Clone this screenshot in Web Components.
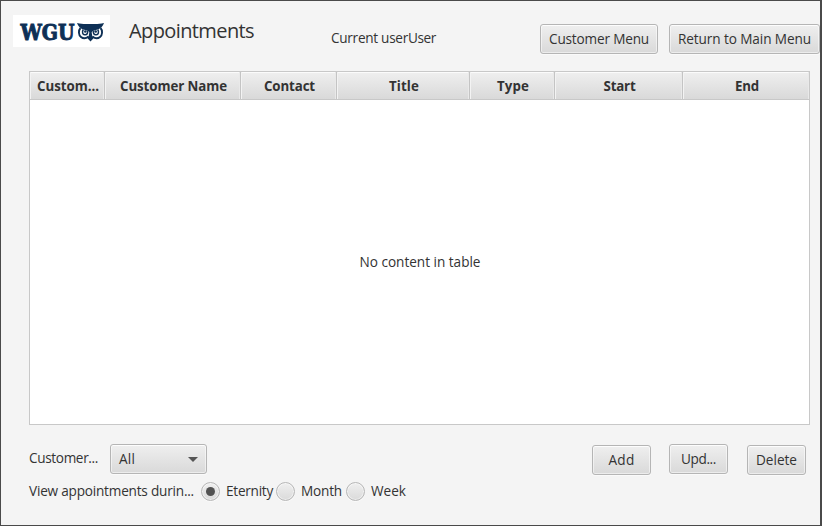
<!DOCTYPE html>
<html lang="en">
<head>
<meta charset="utf-8">
<title>Appointments</title>
<style>
  html, body { margin: 0; height: 100%; overflow: hidden; }
  body { font: 13.6px/18px "Open Sans", "Noto Sans", sans-serif; color: #333; }
</style>
</head>
<body>
<appointments-window></appointments-window>
<script>
// A one-line label whose letter spacing is tuned to reach the width in its "w" attribute.
class FxText extends HTMLElement {
  connectedCallback() {
    const root = this.attachShadow({ mode: 'open' });
    root.innerHTML = `<style>:host{display:inline-block;white-space:nowrap;flex:none}span{display:inline-block}</style><span><slot></slot></span>`;
    const w = parseFloat(this.getAttribute('w'));
    if (!w) return;
    this.style.width = w + 'px';
    const span = root.querySelector('span');
    const natural = span.getBoundingClientRect().width;
    span.style.letterSpacing = ((w - natural) / this.textContent.length) + 'px';
  }
}

class FxButton extends HTMLElement {
  connectedCallback() {
    this.attachShadow({ mode: 'open' }).innerHTML = `<style>
      :host{display:flex;flex:none;box-sizing:border-box;height:30px;align-items:center;justify-content:center;
        border:1px solid #b5b5b5;border-radius:3px;background:linear-gradient(#efefef,#d9d9d9);
        box-shadow:inset 0 0 0 1px #ffffff80,inset 0 1px 0 #fbfbfb,0 1px 0 #fafafa;padding-bottom:1px}
    </style><slot></slot>`;
  }
}

class FxCombo extends HTMLElement {
  connectedCallback() {
    this.attachShadow({ mode: 'open' }).innerHTML = `<style>
      :host{display:flex;flex:none;box-sizing:border-box;width:97px;height:30px;align-items:center;justify-content:space-between;
        border:1px solid #b5b5b5;border-radius:3px;background:linear-gradient(#efefef,#d9d9d9);
        box-shadow:inset 0 0 0 1px #ffffff80,inset 0 1px 0 #fbfbfb,0 1px 0 #fafafa;padding:0 8px 1px 8px}
      svg{display:block;margin-top:2px}
    </style><slot></slot><svg width="10" height="5" viewBox="0 0 10 5"><path d="M0 0H10L5 5Z" fill="#555"/></svg>`;
  }
}

class FxRadio extends HTMLElement {
  connectedCallback() {
    const dot = this.hasAttribute('checked') ? '<i></i>' : '';
    this.attachShadow({ mode: 'open' }).innerHTML = `<style>
      :host{display:flex;flex:none;align-items:center;gap:6px}
      b{display:grid;place-items:center;box-sizing:border-box;width:19px;height:19px;border-radius:50%;border:1px solid #b7b7b7;
        background:linear-gradient(#efefef,#dadada);box-shadow:inset 0 0 0 1px #ffffff80,0 1px 0 #fafafa}
      i{width:9px;height:9px;border-radius:50%;background:#525252}
      ::slotted(*){margin-bottom:1px}
    </style><b>${dot}</b><slot></slot>`;
  }
}

class FxTable extends HTMLElement {
  connectedCallback() {
    const cols = [['Custom...', 75, 62], ['Customer Name', 136, 107], ['Contact', 96, 51], ['Title', 133, 30],
                  ['Type', 85, 32], ['Start', 128, 32], ['End', 126, 24]];
    this.attachShadow({ mode: 'open' }).innerHTML = `<style>
      :host{display:flex;flex-direction:column;box-sizing:border-box;width:781px;height:354px;border:1px solid #c8c8c8;background:#fff}
      header{display:flex;height:27px;border-bottom:1px solid #c8c8c8;font-size:13.3px;font-weight:700;
        background:linear-gradient(#efefef,#d9d9d9);box-shadow:inset 0 1px 0 #fbfbfb}
      header>div{display:flex;box-sizing:border-box;align-items:center;justify-content:center;padding:0 0 0 2px;
        border-right:1px solid #c4c4c4;box-shadow:inset 1px 0 0 #f3f3f3,inset -1px 0 0 #e9e9e9}
      header>div:last-child{flex:1;border:0}
      main{flex:1;display:grid;place-items:center;padding-left:1px}
    </style>
    <header>${cols.map(c => `<div style="width:${c[1]}px"><fx-text w="${c[2]}">${c[0]}</fx-text></div>`).join('')}</header>
    <main><fx-text w="121">No content in table</fx-text></main>`;
  }
}

class WguLogo extends HTMLElement {
  connectedCallback() {
    this.attachShadow({ mode: 'open' }).innerHTML = `<style>:host{display:block;flex:none;width:97px;height:32px;background:#fff}svg{display:block}</style>
    <svg width="97" height="32" viewBox="0 0 97 32">
      <text x="7.500" y="24.500" textLength="54" lengthAdjust="spacingAndGlyphs" font-family="DejaVu Serif, serif" font-weight="700" font-size="22" fill="#0e3056" stroke="#0e3056" stroke-width="1">WGU</text>
      <path fill="#0e3056" d="M64 8C69 9.400 73 9 77.500 9S86 9.400 91 8C90 11 88 13 86 14L80 16L77.500 18L75 16L69 14C67 13 65 11 64 8Z"/>
      <g fill="none" stroke="#0e3056">
        <path d="M67.500 13C65.200 15.500 65.500 20 68 22S73.500 23.200 75.500 21.500" stroke-width="1.900"/>
        <path d="M87.500 13C89.800 15.500 89.500 20 87 22S81.500 23.200 79.500 21.500" stroke-width="1.900"/>
        <path d="M70.300 14.500C68.800 17 69.500 19.500 71.800 19.800S75 18 74.500 16" stroke-width="1.500"/>
        <path d="M84.700 14.500C86.200 17 85.500 19.500 83.200 19.800S80 18 80.500 16" stroke-width="1.500"/>
      </g>
      <circle cx="72.300" cy="16.500" r="1.300" fill="#0e3056"/><circle cx="82.700" cy="16.500" r="1.300" fill="#0e3056"/>
      <path d="M76.600 16H78.400L79.300 21L80.800 23L77.500 26.500L74.200 23L75.700 21Z" fill="#0e3056"/>
    </svg>`;
  }
}

class AppointmentsWindow extends HTMLElement {
  connectedCallback() {
    this.attachShadow({ mode: 'open' }).innerHTML = `<style>
      :host{display:block;box-sizing:border-box;width:822px;height:526px;background:#f4f4f4;
        border:1px solid #4a4a4a;border-right-width:2px;overflow:hidden}
      .top{display:flex;align-items:flex-start;height:70px;padding-left:12px}
      wgu-logo{margin-top:14px}
      .title{font-size:20px;line-height:28px;margin:16px 0 0 19px}
      .user{margin:28px 0 0 77px}
      .user2{margin:28px 0 0 0}
      .cm{width:118px;margin:23px 0 0 104px}
      .rm{width:151px;margin:23px 0 0 11px}
      fx-table{margin-left:28px}
      .filters{display:flex;align-items:flex-start;padding:19px 0 0 28px;height:32px}
      .lbl{margin-top:5px}
      fx-combo{margin-left:12px}
      .act{width:59px}
      .add{margin:1px 0 0 385px}
      .upd{margin-left:18px}
      .del{margin:1px 0 0 19px}
      .range{display:flex;align-items:center;padding:6px 0 0 28px;height:19px}
      .range>fx-text{margin-bottom:1px}
    </style>
    <div class="top">
      <wgu-logo></wgu-logo>
      <fx-text class="title" w="125">Appointments</fx-text>
      <fx-text class="user" w="77">Current user</fx-text><fx-text class="user2" w="28">User</fx-text>
      <fx-button class="cm"><fx-text w="100">Customer Menu</fx-text></fx-button>
      <fx-button class="rm"><fx-text w="133">Return to Main Menu</fx-text></fx-button>
    </div>
    <fx-table></fx-table>
    <div class="filters">
      <fx-text class="lbl" w="69">Customer...</fx-text>
      <fx-combo><fx-text w="16">All</fx-text></fx-combo>
      <fx-button class="act add"><fx-text w="26">Add</fx-text></fx-button>
      <fx-button class="act upd"><fx-text w="35">Upd...</fx-text></fx-button>
      <fx-button class="act del"><fx-text w="41">Delete</fx-text></fx-button>
    </div>
    <div class="range">
      <fx-text w="165">View appointments durin...</fx-text>
      <fx-radio checked style="margin-left:7px"><fx-text w="47">Eternity</fx-text></fx-radio>
      <fx-radio style="margin-left:3px"><fx-text w="41">Month</fx-text></fx-radio>
      <fx-radio style="margin-left:4px"><fx-text w="35">Week</fx-text></fx-radio>
    </div>`;
  }
}
customElements.define('fx-text', FxText);
customElements.define('fx-button', FxButton);
customElements.define('fx-combo', FxCombo);
customElements.define('fx-radio', FxRadio);
customElements.define('fx-table', FxTable);
customElements.define('wgu-logo', WguLogo);
customElements.define('appointments-window', AppointmentsWindow);
</script>
</body>
</html>
